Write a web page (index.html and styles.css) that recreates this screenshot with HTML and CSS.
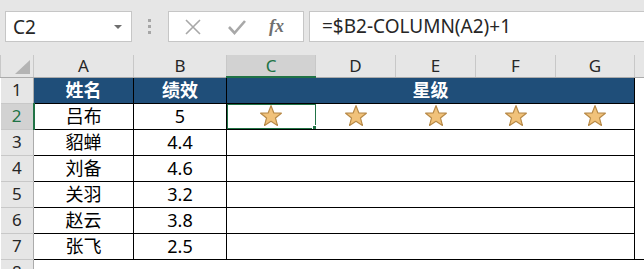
FILE: index.html
```html
<!DOCTYPE html>
<html lang="zh-CN">
<head>
    <meta charset="UTF-8">
    <title>星级</title>
    <link rel="stylesheet" href="styles.css">
</head>
<body>
    <div class="toolbar">
        <div class="namebox">
            <span>C2</span>
            <span class="caret"></span>
        </div>
        <div class="grip"><i></i><i></i><i></i></div>
        <div class="buttons">
            <svg class="btn" width="18" height="18" viewBox="0 0 18 18"><path d="M2 2 L16 16 M16 2 L2 16" stroke="#a8a8a8" stroke-width="1.6" fill="none"/></svg>
            <svg class="btn" width="20" height="18" viewBox="0 0 20 18"><path d="M2 9 L7.5 15 L18 3" stroke="#a8a8a8" stroke-width="2.6" fill="none"/></svg>
            <span class="fx">fx</span>
        </div>
        <div class="formula">=$B2-COLUMN(A2)+1</div>
    </div>

    <table class="sheet">
        <colgroup>
            <col style="width:33px">
            <col style="width:100px">
            <col style="width:93px">
            <col style="width:89px">
            <col style="width:80px">
            <col style="width:80px">
            <col style="width:80px">
            <col style="width:79px">
            <col>
        </colgroup>
        <tr class="colhead">
            <th class="corner"><span class="tri"></span></th>
            <th>A</th><th>B</th><th class="on">C</th><th>D</th><th>E</th><th>F</th><th>G</th><th class="rest"></th>
        </tr>
        <tr>
            <th class="rowhead">1</th>
            <td class="title">姓名</td>
            <td class="title">绩效</td>
            <td class="title" colspan="5">星级</td>
            <td class="rest"></td>
        </tr>
        <tr>
            <th class="rowhead on">2</th>
            <td>吕布</td>
            <td>5</td>
            <td class="stars first active"><svg class="star" width="24" height="24" viewBox="-1 -1 22 22"><use href="#star"/></svg><span class="selbox"><span class="handle"></span></span></td>
            <td class="stars"><svg class="star" width="24" height="24" viewBox="-1 -1 22 22"><use href="#star"/></svg></td>
            <td class="stars"><svg class="star" width="24" height="24" viewBox="-1 -1 22 22"><use href="#star"/></svg></td>
            <td class="stars"><svg class="star" width="24" height="24" viewBox="-1 -1 22 22"><use href="#star"/></svg></td>
            <td class="stars last"><svg class="star" width="24" height="24" viewBox="-1 -1 22 22"><use href="#star"/></svg></td>
            <td class="rest"></td>
        </tr>
        <tr>
            <th class="rowhead">3</th><td>貂蝉</td><td>4.4</td>
            <td class="blank" colspan="5"></td><td class="rest"></td>
        </tr>
        <tr>
            <th class="rowhead">4</th><td>刘备</td><td>4.6</td>
            <td class="blank" colspan="5"></td><td class="rest"></td>
        </tr>
        <tr>
            <th class="rowhead">5</th><td>关羽</td><td>3.2</td>
            <td class="blank" colspan="5"></td><td class="rest"></td>
        </tr>
        <tr>
            <th class="rowhead">6</th><td>赵云</td><td>3.8</td>
            <td class="blank" colspan="5"></td><td class="rest"></td>
        </tr>
        <tr>
            <th class="rowhead">7</th><td>张飞</td><td>2.5</td>
            <td class="blank" colspan="5"></td><td class="rest"></td>
        </tr>
        <tr class="after">
            <th class="rowhead">8</th>
            <td class="empty" colspan="8"></td>
        </tr>
    </table>

    <svg width="0" height="0" class="defs">
        <defs>
            <path id="star" d="M10 0.5 L12.6 7.2 L19.5 7.4 L14.1 11.8 L15.9 18.6 L10 14.8 L4.1 18.6 L5.9 11.8 L0.5 7.4 L7.4 7.2 Z" fill="#f1c27a" stroke="#b88a48" stroke-width="1.1" stroke-linejoin="round"/>
        </defs>
    </svg>
</body>
</html>
```

FILE: styles.css
```css
body, html {
    margin: 0;
    padding: 0;
    background: #ffffff;
    font-family: "Noto Sans", "Noto Sans CJK SC", sans-serif;
    overflow: hidden;
}

.toolbar {
    display: flex;
    align-items: center;
    height: 55px;
    padding: 0 0 2px 5px;
    box-sizing: border-box;
    background: #e6e6e6;
}

.namebox {
    display: flex;
    align-items: center;
    justify-content: space-between;
    width: 127px;
    height: 31px;
    box-sizing: border-box;
    padding: 0 9px 0 7px;
    background: #ffffff;
    border: 1px solid #c6c6c6;
    font-size: 19px;
    color: #262626;
}

.caret {
    width: 0;
    height: 0;
    border-left: 4px solid transparent;
    border-right: 4px solid transparent;
    border-top: 4px solid #6e6e6e;
}

.grip {
    display: flex;
    flex-direction: column;
    gap: 3px;
    margin: 0 17px 0 16px;
}

.grip i {
    display: block;
    width: 3px;
    height: 3px;
    background: #a6a6a6;
}

.buttons {
    display: flex;
    align-items: center;
    width: 136px;
    height: 31px;
    box-sizing: border-box;
    padding-left: 15px;
    gap: 25px;
    background: #ffffff;
    border: 1px solid #c6c6c6;
}

.fx {
    font-family: "Liberation Serif", serif;
    font-style: italic;
    font-weight: bold;
    font-size: 18px;
    color: #6f6f6f;
    margin-left: -3px;
}

.formula {
    flex: 1;
    height: 31px;
    line-height: 29px;
    box-sizing: border-box;
    margin-left: 5px;
    padding-left: 12px;
    background: #ffffff;
    border: 1px solid #c6c6c6;
    border-right: none;
    font-size: 19px;
    color: #262626;
}

.sheet {
    border-collapse: collapse;
    table-layout: fixed;
    width: 644px;
}

.sheet th,
.sheet td {
    padding: 0;
    text-align: center;
    overflow: hidden;
    white-space: nowrap;
}

.colhead th {
    height: 21px;
    background: #e6e6e6;
    border: 1px solid #c8c8c8;
    border-top: none;
    border-bottom: 1px solid #ababab;
    font-weight: normal;
    font-size: 17px;
    line-height: 20px;
    color: #262626;
}

.colhead th.on {
    background: #d2d2d2;
    color: #217346;
    border-bottom: 2px solid #217346;
}

.colhead th.rest {
    border-right: none;
}

.corner {
    position: relative;
}

.tri {
    position: absolute;
    right: 3px;
    bottom: 3px;
    width: 0;
    height: 0;
    border-left: 15px solid transparent;
    border-bottom: 14px solid #b4b4b4;
}

.rowhead {
    height: 25px;
    background: #e6e6e6;
    border: 1px solid #c8c8c8;
    border-left: none;
    border-right: 1px solid #ababab;
    font-weight: normal;
    font-size: 17px;
    line-height: 20px;
    color: #262626;
}

.rowhead.on {
    background: #d2d2d2;
    color: #217346;
    border-right: 2px solid #217346;
}

.sheet td {
    border: 1px solid #000000;
    font-size: 18px;
    line-height: 22px;
    color: #000000;
}

.sheet td.title {
    background: #1f4e79;
    color: #ffffff;
    font-weight: bold;
}

.sheet td.stars {
    border-left: none;
    border-right: none;
    line-height: 0;
}

.sheet td.stars.first {
    border-left: 1px solid #000000;
}

.sheet td.stars.last {
    border-right: 1px solid #000000;
}

.star {
    vertical-align: middle;
}

.active {
    position: relative;
}

.selbox {
    position: absolute;
    left: -1px;
    top: -1px;
    right: -1px;
    bottom: -1px;
    border: 2px solid #217346;
}

.handle {
    position: absolute;
    right: -4px;
    bottom: -4px;
    width: 5px;
    height: 5px;
    background: #217346;
    border: 1px solid #ffffff;
}

.sheet td.rest {
    border: none;
    border-left: 1px solid #000000;
}

.sheet td.empty {
    border: none;
    border-top: 1px solid #000000;
}

.defs {
    position: absolute;
}
```
